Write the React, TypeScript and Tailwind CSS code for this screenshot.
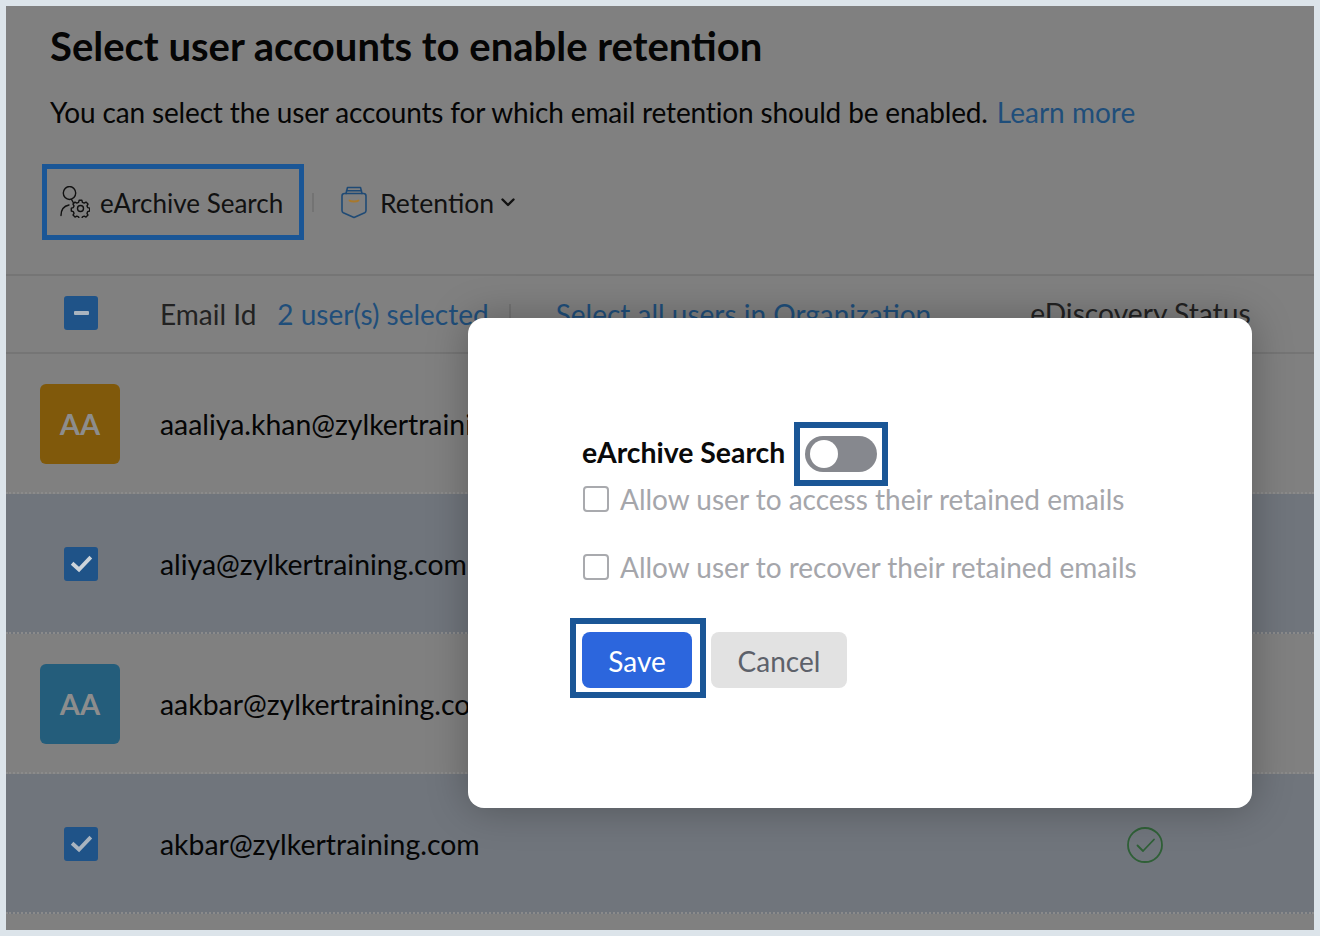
const LATO = "font-['Lato','Noto_Sans',sans-serif]";

function UserGearIcon() {
  return (
    <svg width="30" height="32" viewBox="0 0 30 32" fill="none" stroke="#111" strokeWidth="1.4" strokeLinecap="round" strokeLinejoin="round">
      <ellipse cx="9.500" cy="7" rx="6.200" ry="6.500" />
      <path d="M1 29.500c0-6 3-9.500 8-10.500M11.500 13.500l2 3.500" />
      <circle cx="20.500" cy="22.500" r="3" />
      <path d="M18.600 15.800h2.800l.5 2 1.800.8 1.800-1 2 2-1 1.800.7 1.700 2 .6v2.800l-2 .6-.7 1.700 1 1.800-2 2-1.800-1-1.800.7-.5 2h-2.800l-.5-2-1.800-.7-1.800 1-2-2 1-1.800-.7-1.700-2-.6v-2.800l2-.6.7-1.700-1-1.800 2-2 1.800 1 1.800-.8z" transform="translate(.5 -1.500)" />
    </svg>
  );
}

function RetentionIcon() {
  return (
    <svg width="28" height="34" viewBox="0 0 28 34" fill="none" strokeLinecap="round" strokeLinejoin="round">
      <path d="M2 11c0-1.500 1-2.500 2.500-2.500h19c1.500 0 2.500 1 2.500 2.500v14.500c0 1-.5 1.800-1.300 2.200L14 32.500 3.300 27.700C2.500 27.300 2 26.500 2 25.500z" stroke="#1f4a75" strokeWidth="1.600" />
      <path d="M6 8.500 7.500 2.500h13L22 8.500M6.500 5.800h15" stroke="#1f4a75" strokeWidth="1.600" />
      <path d="M9.500 15.500c1.500 1.300 7.500 1.300 9 0" stroke="#a8782c" strokeWidth="1.800" />
    </svg>
  );
}

function CheckBox({ tick }: { tick: string }) {
  return (
    <div className="ml-[58px] flex h-[34px] w-[34px] items-center justify-center rounded-[3px] bg-[#1f5388]">
      <svg width="24" height="20" viewBox="0 0 24 20" fill="none" stroke={tick} strokeWidth="3.800" strokeLinecap="square">
        <path d="M4.500 10.500 10 15.500 20.500 4.500" />
      </svg>
    </div>
  );
}

function Avatar({ bg }: { bg: string }) {
  return (
    <div className={`ml-[34px] flex h-20 w-20 items-center justify-center rounded-[6px] text-[29px] font-bold text-[#8d8d8d] ${bg}`}>AA</div>
  );
}

function Row({ email, tick, avatarBg, status }: { email: string; tick?: string; avatarBg?: string; status?: boolean }) {
  return (
    <div className={`flex h-[140px] items-center border-b-2 border-dotted border-[#8b8b8b] pt-[2px] ${tick ? "bg-[#70757c]" : ""}`}>
      <div className="flex w-[154px] shrink-0">
        {tick ? <CheckBox tick={tick} /> : <Avatar bg={avatarBg ?? ""} />}
      </div>
      <span className="text-[28.4px] text-[#050505]">{email}</span>
      {status && (
        <svg className="ml-auto mr-[151px] mt-[1px]" width="36" height="36" viewBox="0 0 36 36" fill="none" stroke="#2f6037" strokeWidth="1.800" strokeLinecap="round" strokeLinejoin="round">
          <circle cx="18" cy="18" r="17" />
          <path d="M10.500 18.500 16 24 27 12.500" />
        </svg>
      )}
    </div>
  );
}

export default function App() {
  return (
    <div className={`h-[936px] w-[1320px] overflow-hidden bg-[#dce4ea] p-[6px] ${LATO}`}>
      <div className="relative h-[924px] w-[1308px] overflow-hidden bg-[#808080]">
        <div className="px-[44px] pt-[15px]">
          <h1 className="text-[40px] font-bold leading-[50px] text-[#050505]">Select user accounts to enable retention</h1>
          <p className="mt-[22px] text-[28px] leading-[38px] tracking-[-0.15px] text-[#050505]">
            You can select the user accounts for which email retention should be enabled.
            <span className="ml-[9px] tracking-normal text-[#1f4e7a]">Learn more</span>
          </p>
        </div>

        <div className="mt-[33px] flex h-[76px] items-center pl-[36px]">
          <div className="flex h-[76px] w-[262px] items-center gap-[10px] border-[5px] border-[#1a5696] pl-[13px]">
            <UserGearIcon />
            <span className="pt-[3px] text-[26px] text-[#111]">eArchive Search</span>
          </div>
          <div className="ml-[8px] h-[19px] w-[2px] bg-[#737373]" />
          <div className="ml-[26px]"><RetentionIcon /></div>
          <span className="ml-[12px] pt-[3px] text-[26.6px] text-[#111]">Retention</span>
          <svg className="ml-[6px]" width="16" height="12" viewBox="0 0 16 12" fill="none" stroke="#111" strokeWidth="2.400" strokeLinecap="round" strokeLinejoin="round">
            <path d="M2.500 3.500 8 9l5.500-5.500" />
          </svg>
        </div>

        <div className="mt-[34px] flex h-[80px] items-center border-y-2 border-[#757575] pb-[1px] text-[28px]">
          <div className="ml-[58px] mb-[1px] flex h-[34px] w-[34px] items-center justify-center rounded-[3px] bg-[#1f5388]">
            <div className="h-[4px] w-[15px] rounded-[1px] bg-[#a9b4bf]" />
          </div>
          <span className="ml-[62px] text-[#222]">Email Id</span>
          <span className="ml-[21px] text-[#1f4e7a]">2 user(s) selected</span>
          <div className="ml-[20px] h-[19px] w-[2px] bg-[#737373]" />
          <span className="ml-[45px] text-[#1f4e7a]">Select all users in Organization</span>
          <span className="ml-[99px] text-[28.2px] text-[#222]">eDiscovery Status</span>
        </div>

        <Row email="aaaliya.khan@zylkertraining.com" avatarBg="bg-[#80590b]" />
        <Row email="aliya@zylkertraining.com" tick="#cdd4da" />
        <Row email="aakbar@zylkertraining.com" avatarBg="bg-[#245d7b]" />
        <Row email="akbar@zylkertraining.com" tick="#a9b4bf" status />

        <div className="absolute left-[462px] top-[312px] h-[490px] w-[784px] rounded-[16px] bg-white pl-[114px] pt-[104px] shadow-[0_0_40px_rgba(0,0,0,0.28)]">
          <div className="flex h-[64px] items-center">
            <span className="mb-[4px] text-[28.4px] font-bold text-[#0a0a0a]">eArchive Search</span>
            <div className="ml-[9px] flex h-[64px] w-[94px] items-center justify-center border-[6px] border-[#1a5696]">
              <div className="flex h-[36px] w-[72px] items-center rounded-full bg-[#86888e] pl-[5px]">
                <div className="h-[28px] w-[28px] rounded-full bg-white" />
              </div>
            </div>
          </div>
          <div className="-mt-[6px] flex flex-col gap-[30px] text-[28px] leading-[38px] text-[#a5a6ab]">
            <label className="flex items-center pl-[1px]">
              <span className="h-[26px] w-[26px] rounded-[4px] border-2 border-[#a9aaae]" />
              <span className="ml-[11px]">Allow user to access their retained emails</span>
            </label>
            <label className="flex items-center pl-[1px]">
              <span className="h-[26px] w-[26px] rounded-[4px] border-2 border-[#a9aaae]" />
              <span className="ml-[11px]">Allow user to recover their retained emails</span>
            </label>
          </div>
          <div className="-ml-[12px] mt-[32px] flex items-center">
            <div className="h-[80px] w-[136px] border-[6px] border-[#1a5696] pl-[6px] pt-[8px]">
              <button className="h-[56px] w-[110px] rounded-[8px] bg-[#2c66dd] pt-[2px] text-[28px] text-white">Save</button>
            </div>
            <button className="ml-[5px] mt-[4px] h-[56px] w-[136px] rounded-[8px] bg-[#e2e2e2] pt-[2px] text-[28px] text-[#5d616a]">Cancel</button>
          </div>
        </div>
      </div>
    </div>
  );
}
